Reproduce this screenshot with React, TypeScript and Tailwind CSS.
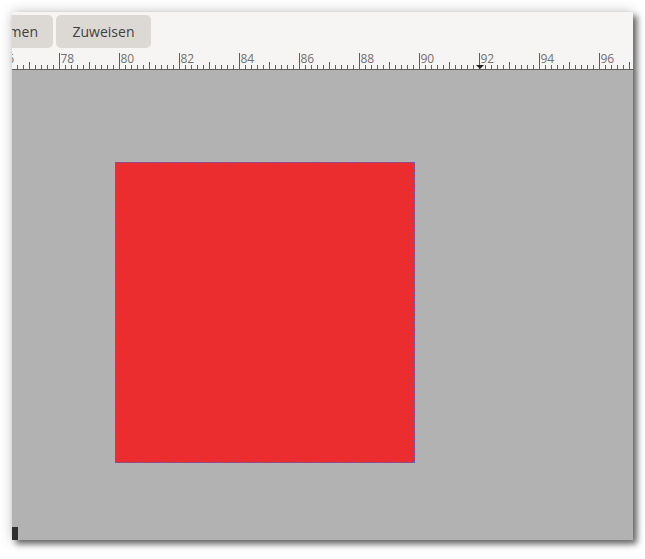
import React from "react";

const START = 76;
const END = 97.4;
const PX_PER_UNIT = 30;
const ORIGIN_X = 47; // x of value 78 inside ruler

const xOf = (v: number) => ORIGIN_X + (v - 78) * PX_PER_UNIT;

const Ruler = () => {
  const ticks: React.ReactNode[] = [];
  for (let i = Math.round(START * 5); i <= Math.round(END * 5); i++) {
    const v = i / 5;
    const x = Math.round(xOf(v)) + 0.5;
    const isMajor = i % 10 === 0;
    const isMid = i % 5 === 0 && !isMajor;
    const h = isMajor ? 16 : isMid ? 7 : 4;
    ticks.push(
      <line key={i} x1={x} x2={x} y1={19 - h} y2={19} stroke="#5e5e5e" strokeWidth={1} />,
    );
    if (isMajor) {
      ticks.push(
        <text
          key={`t${i}`}
          x={x + 1}
          y={13}
          fontSize={12}
          fill="#707070"
          fontFamily="'Open Sans', 'DejaVu Sans', sans-serif"
        >
          {v}
        </text>,
      );
    }
  }
  return (
    <svg width={621} height={20} className="block">
      <rect width={621} height={20} fill="#f6f5f3" />
      {ticks}
      <line x1={0} x2={621} y1={19.5} y2={19.5} stroke="#5e5e5e" strokeWidth={1} />
      <path d="M464 15 L472 15 L468 19 Z" fill="#222" />
    </svg>
  );
};

export default function App() {
  return (
    <div className="w-[645px] h-[559px] bg-white pl-[12px] pt-[12px]">
      <div className="relative flex h-[528px] w-[621px] flex-col overflow-hidden bg-[#b2b2b2] shadow-[4px_4px_6px_rgba(0,0,0,0.55),0_0_12px_rgba(0,0,0,0.22)]">
        <div className="flex h-[38px] items-center gap-[3px] bg-[#f6f5f3] font-['Open_Sans',sans-serif] text-[14px] text-[#3f3f3f]">
          <div className="-ml-[8px] flex h-[33px] w-[49px] items-center justify-end rounded-[5px] bg-[#dcd9d4] pr-[15px]">
            men
          </div>
          <div className="flex h-[33px] w-[95px] items-center justify-center rounded-[5px] bg-[#dcd9d4]">
            Zuweisen
          </div>
        </div>
        <Ruler />
        <div className="relative flex-1 pl-[103px] pt-[92px]">
          <div className="h-[301px] w-[300px] border border-dashed border-[#5a5fc4] bg-[#eb2d2f]" />
          <div className="absolute bottom-0 left-0 h-[13px] w-[6px] bg-[#2e2e2e]" />
        </div>
      </div>
    </div>
  );
}
